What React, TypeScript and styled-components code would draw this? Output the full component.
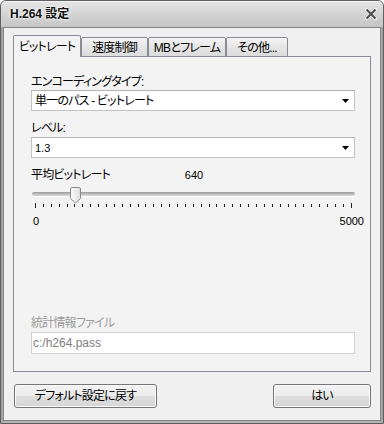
import React from "react";
import styled, { createGlobalStyle } from "styled-components";

const GlobalStyle = createGlobalStyle`
  html, body { margin: 0; padding: 0; background: #ffffff; }
  body {
    font-family: "Liberation Sans", "Noto Sans CJK JP", sans-serif;
    font-size: 12px;
    color: #000;
    font-feature-settings: "palt";
    letter-spacing: -0.8px;
  }
  * { box-sizing: border-box; }
`;

const Window = styled.div`
  width: 384px;
  height: 424px;
  display: flex;
  flex-direction: column;
  background: linear-gradient(90deg, #9c9c9c 0px, #b4b4b4 3px, #b4b4b4 calc(100% - 3px), #9c9c9c 100%);
  border: 1px solid #5e5e5e;
  border-radius: 6px 6px 0 0;
  overflow: hidden;
`;

const TitleBar = styled.div`
  height: 26px;
  flex: none;
  display: flex;
  align-items: center;
  justify-content: space-between;
  padding: 0 6px 0 9px;
  background: linear-gradient(#e6e6e6, #d0d0d0 60%, #c6c6c6);
  box-shadow: inset 0 1px 0 #f4f4f4;
`;

const Title = styled.span`
  font-weight: bold;
  font-size: 12px;
  line-height: 14px;
  letter-spacing: 0;
  color: #111;
  text-shadow: 0 0 4px #ffffff, 0 0 2px #ffffff;
`;

const Client = styled.div`
  flex: 1;
  margin: 0 2px 2px;
  border: 1px solid #838383;
  background: #f0f0f0;
  padding: 7px 9px 0;
  display: flex;
  flex-direction: column;
`;

const TabStrip = styled.div`
  display: flex;
  align-items: flex-end;
  height: 22px;
  margin-bottom: -1px;
  position: relative;
  z-index: 1;
`;

const Tab = styled.div<{ $active?: boolean; $w: number }>`
  width: ${(p) => p.$w}px;
  height: ${(p) => (p.$active ? 22 : 20)}px;
  border: 1px solid #898c95;
  border-bottom: ${(p) => (p.$active ? "none" : "1px solid #898c95")};
  border-radius: 2px 2px 0 0;
  background: ${(p) => (p.$active ? "#f3f3f3" : "linear-gradient(#f4f4f4, #e6e6e6 50%, #dcdcdc)")};
  display: flex;
  align-items: center;
  justify-content: center;
  padding-top: ${(p) => (p.$active ? 0 : 1)}px;
  line-height: 14px;
  white-space: nowrap;
`;

const Panel = styled.div`
  height: 316px;
  flex: none;
  border: 1px solid #898c95;
  background: #f3f3f3;
  padding: 18px 15px 17px 17px;
  display: flex;
  flex-direction: column;
`;

const Label = styled.div<{ $disabled?: boolean; $gap?: number }>`
  height: 14px;
  line-height: 14px;
  white-space: nowrap;
  color: ${(p) => (p.$disabled ? "#9b9b9b" : "#000")};
  margin-bottom: ${(p) => p.$gap ?? 1}px;
`;

const Select = styled.div`
  height: 21px;
  background: #ffffff;
  border: 1px solid #c3c3c3;
  border-top-color: #b3b3b3;
  display: flex;
  align-items: center;
  justify-content: space-between;
  padding: 0 5px 0 3px;
  line-height: 14px;
  white-space: nowrap;
`;

const Latin = styled.span`
  font-size: 11px;
  letter-spacing: 0;
`;

const Spacer = styled.div<{ $h: number }>`
  height: ${(p) => p.$h}px;
  flex: none;
`;

const SliderHeader = styled.div`
  display: grid;
  grid-template-columns: 1fr auto 1fr;
  height: 14px;
  line-height: 14px;
  white-space: nowrap;
`;

const Value = styled.span`
  font-size: 11px;
  letter-spacing: 0;
  padding-left: 2px;
`;

const Slider = styled.div`
  position: relative;
  width: 323px;
  margin: 5px 0 0 1px;
  height: 16px;
`;

const Track = styled.div`
  position: absolute;
  left: 0;
  right: 0;
  top: 5px;
  height: 4px;
  border-radius: 2px;
  background: linear-gradient(#9a9a9a, #c4c4c4 60%, #d8d8d8);
  box-shadow: 0 1px 0 #ffffff;
`;

const Thumb = styled.svg`
  position: absolute;
  top: 0;
  width: 11px;
  height: 17px;
`;

const TickRow = styled.div`
  width: 323px;
  margin-left: 1px;
  padding: 0 3px;
  height: 5px;
  display: flex;
  justify-content: space-between;
  align-items: flex-start;
`;

const Tick = styled.div<{ $long?: boolean }>`
  width: 1px;
  height: ${(p) => (p.$long ? 5 : 3)}px;
  margin-top: ${(p) => (p.$long ? 0 : 1)}px;
  background: #202020;
`;

const Scale = styled.div`
  margin: 6px -9px 0 2px;
  height: 14px;
  line-height: 14px;
  display: flex;
  justify-content: space-between;
  font-size: 11px;
  letter-spacing: 0;
`;

const Input = styled.div`
  height: 22px;
  background: #ffffff;
  border: 1px solid #d2d2d2;
  display: flex;
  align-items: center;
  padding: 0 1px;
  color: #7e7e7e;
  font-size: 12px;
  letter-spacing: 0;
`;

const Grow = styled.div`
  flex: 1;
`;

const ButtonRow = styled.div`
  display: flex;
  justify-content: space-between;
  margin-top: 12px;
  padding-left: 1px;
`;

const Button = styled.div<{ $w: number }>`
  width: ${(p) => p.$w}px;
  height: 24px;
  border: 1px solid #767676;
  border-radius: 3px;
  background: linear-gradient(#f3f3f3, #ececec 50%, #dedede 52%, #d6d6d6);
  box-shadow: inset 0 0 0 1px #fbfbfb;
  display: flex;
  align-items: center;
  justify-content: center;
  line-height: 14px;
  white-space: nowrap;
`;

const Arrow = () => (
  <svg width="7" height="4" viewBox="0 0 7 4">
    <path d="M0 0H7L3.5 4Z" fill="#000" />
  </svg>
);

const CloseIcon = () => (
  <svg width="12" height="12" viewBox="0 0 12 12">
    <path d="M1.5 1.5L10.5 10.5M10.5 1.5L1.5 10.5" stroke="#ffffff" strokeWidth="3.6" strokeLinecap="square" opacity="0.6" />
    <path d="M1.5 1.5L10.5 10.5M10.5 1.5L1.5 10.5" stroke="#4d4d4d" strokeWidth="2" />
  </svg>
);

const MIN = 0;
const MAX = 5000;
const VALUE = 640;
const TICKS = 41;

export default function App() {
  const frac = (VALUE - MIN) / (MAX - MIN);
  const thumbLeft = 3 + frac * 316 - 5;
  return (
    <>
      <GlobalStyle />
      <Window>
        <TitleBar>
          <Title>H.264 設定</Title>
          <CloseIcon />
        </TitleBar>
        <Client>
          <TabStrip>
            <Tab $active $w={68}>ビットレート</Tab>
            <Tab $w={67}>速度制御</Tab>
            <Tab $w={78}>MBとフレーム</Tab>
            <Tab $w={62}>その他...</Tab>
          </TabStrip>
          <Panel>
            <Label>エンコーディングタイプ:</Label>
            <Select>
              <span>単一のパス - ビットレート</span>
              <Arrow />
            </Select>
            <Spacer $h={10} />
            <Label $gap={2}>レベル:</Label>
            <Select>
              <Latin>1.3</Latin>
              <Arrow />
            </Select>
            <Spacer $h={10} />
            <SliderHeader>
              <span>平均ビットレート</span>
              <Value>640</Value>
              <span />
            </SliderHeader>
            <Slider>
              <Track />
              <Thumb viewBox="0 0 11 17" style={{ left: thumbLeft }}>
                <defs>
                  <linearGradient id="tg" x1="0" y1="0" x2="1" y2="0">
                    <stop offset="0" stopColor="#fdfdfd" />
                    <stop offset="1" stopColor="#dedede" />
                  </linearGradient>
                </defs>
                <path
                  d="M0.5 2 Q0.5 0.5 2 0.5 H9 Q10.5 0.5 10.5 2 V11.5 L5.5 16 L0.5 11.5 Z"
                  fill="url(#tg)"
                  stroke="#8c8c8c"
                />
              </Thumb>
            </Slider>
            <TickRow>
              {Array.from({ length: TICKS }, (_, i) => (
                <Tick key={i} $long={i === 0 || i === TICKS - 1} />
              ))}
            </TickRow>
            <Scale>
              <span>0</span>
              <span>5000</span>
            </Scale>
            <Grow />
            <Label $disabled $gap={2}>統計情報ファイル</Label>
            <Input>c:/h264.pass</Input>
          </Panel>
          <ButtonRow>
            <Button $w={143}>デフォルト設定に戻す</Button>
            <Button $w={98}>はい</Button>
          </ButtonRow>
        </Client>
      </Window>
    </>
  );
}
